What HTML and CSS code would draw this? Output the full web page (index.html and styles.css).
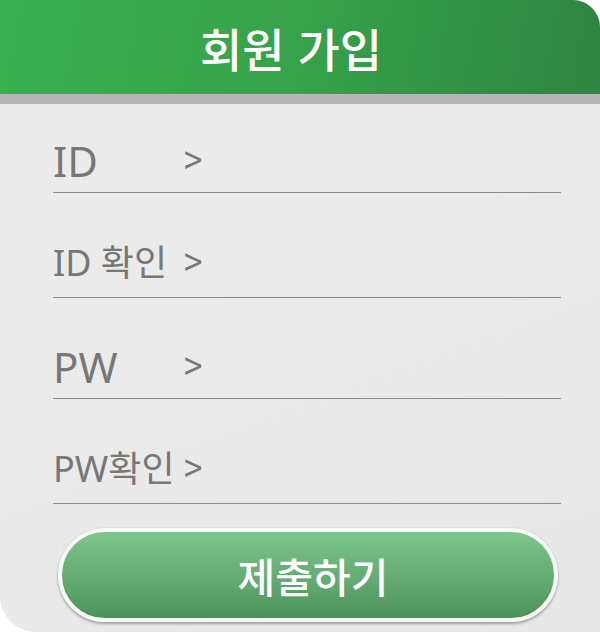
FILE: index.html
```html
<!DOCTYPE html>
<html lang="ko">
<head>
<meta charset="utf-8">
<title>회원 가입</title>
<link rel="stylesheet" href="styles.css">
</head>
<body>
<div class="card">
  <header class="head">
    <h1 class="title">회원 가입</h1>
  </header>
  <form class="form">
    <div class="row row-big"><span class="label">ID</span><span class="arrow">&gt;</span></div>
    <div class="row row-small"><span class="label">ID 확인</span><span class="arrow">&gt;</span></div>
    <div class="row row-big"><span class="label">PW</span><span class="arrow">&gt;</span></div>
    <div class="row row-small"><span class="label">PW확인</span><span class="arrow">&gt;</span></div>
    <button type="button" class="submit">제출하기</button>
  </form>
</div>
</body>
</html>
```
FILE: styles.css
```css
* { box-sizing: border-box; }
html, body { margin: 0; padding: 0; background: #ffffff; }
body { font-family: "Noto Sans", "Noto Sans CJK KR", sans-serif; }

.card {
  width: 600px;
  height: 632px;
  border-radius: 0 27px 0 36px;
  overflow: hidden;
  background: linear-gradient(160deg, #ececec 0%, #eaeaea 60%, #e7e7e7 100%);
}

.head {
  height: 104px;
  border-bottom: 10px solid #b4b7b3;
  background: linear-gradient(100deg, #39b14f 0%, #36a24b 50%, #2e8441 100%);
  display: flex;
  align-items: center;
  justify-content: center;
  padding-right: 18px;
}

.title {
  margin: 0;
  color: #ffffff;
  font-family: "Noto Sans CJK KR", sans-serif;
  font-weight: 500;
  font-size: 46px;
  line-height: 1;
  letter-spacing: 0;
}

.form {
  padding: 0 39px 0 53px;
}

.row {
  display: flex;
  align-items: flex-end;
  border-bottom: 1px solid #8c8c8c;
  color: #777777;
}

.row-big { height: 89px; padding-bottom: 10px; }
.row-small { height: 105px; padding-bottom: 16px; }
.row-big + .row-small { height: 105px; }
.row-small + .row-big { height: 101px; }

.label {
  width: 131px;
  line-height: 1;
}
.row-big .label { font-size: 42px; }
.row-small .label { font-size: 36px; }

.arrow {
  display: inline-block;
  font-family: "Noto Sans CJK KR", sans-serif;
  font-weight: 400;
  font-size: 33px;
  line-height: 1;
  transform: scaleY(1.2);
  transform-origin: 50% 70%;
  margin-bottom: 2px;
}
.row-big .arrow { margin-bottom: 5px; }

.submit {
  display: flex;
  align-items: center;
  justify-content: center;
  margin: 24px 0 0 5px;
  width: 500px;
  height: 94px;
  border: 4px solid #f8f8f8;
  border-radius: 47px;
  background: linear-gradient(180deg, #7cc68b 0%, #66ad76 50%, #4c935a 100%);
  box-shadow: 0 2px 3px rgba(0, 0, 0, 0.3), 0 0 1px rgba(0,0,0,0.3);
  color: #ffffff;
  font-family: "Noto Sans CJK KR", sans-serif;
  font-size: 41px;
  font-weight: 500;
  line-height: 1;
  padding: 0 0 0 10px;
  cursor: pointer;
}
```
